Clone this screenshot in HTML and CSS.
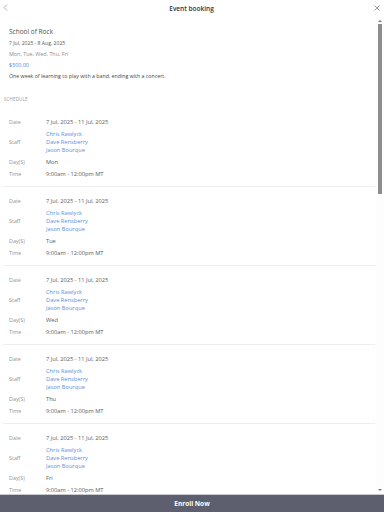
FILE: index.html
```html
<!DOCTYPE html>
<html>
    <head>
        <meta charset="utf-8">
        <link rel="stylesheet" href="styles.css">
    </head>
    <body>
        <div class="topbar">
            <span class="back">
                <svg width="5" height="7" viewBox="0 0 5 7"><path d="M4 0.5 L1 3.5 L4 6.5" fill="none" stroke="#999" stroke-width="0.8"/></svg>
            </span>
            <span class="title">Event booking</span>
            <span class="close">
                <svg width="6" height="6" viewBox="0 0 6 6"><path d="M0.5 0.5 L5.5 5.5 M5.5 0.5 L0.5 5.5" fill="none" stroke="#888" stroke-width="0.8"/></svg>
            </span>
        </div>

        <div class="body-wrap">
            <div class="scroller">
                <div class="intro">
                    <div class="event-name">School of Rock</div>
                    <div class="event-dates">7 Jul, 2025 - 8 Aug, 2025</div>
                    <div class="event-days">Mon, Tue, Wed, Thu, Fri</div>
                    <div class="event-price">$300.00</div>
                    <div class="event-desc">One week of learning to play with a band, ending with a concert.</div>
                </div>

                <div class="section-title">SCHEDULE</div>

                <div class="schedule" id="schedule"></div>
            </div>

            <div class="scrollbar">
                <span class="arrow up"></span>
                <span class="thumb"></span>
                <span class="arrow down"></span>
            </div>
        </div>

        <div class="footer">Enroll Now</div>

        <script type="text/javascript">
            var days = ["Mon", "Tue", "Wed", "Thu", "Fri"];
            var staff = ["Chris Rawlyck", "Dave Rensberry", "Jason Bourque"];
            var html = "";
            for (var i = 0; i < days.length; i++) {
                html += `<div class="session">
                            <div class="label">Date</div><div class="value">7 Jul, 2025 - 11 Jul, 2025</div>
                            <div class="label">Staff</div>
                            <div class="value staff">${staff.map(function(s) { return "<div>" + s + "</div>"; }).join("")}</div>
                            <div class="label">Day(S)</div><div class="value">${days[i]}</div>
                            <div class="label">Time</div><div class="value">9:00am - 12:00pm MT</div>
                         </div>`;
            }
            document.getElementById("schedule").innerHTML = html;
        </script>
    </body>
</html>
```

FILE: styles.css
```css
html, body {
    margin: 0;
    height: 100%;
}

body {
    display: flex;
    flex-direction: column;
    font-family: "Open Sans", "Noto Sans", sans-serif;
    background-color: #ffffff;
    color: #444444;
}

.topbar {
    height: 17px;
    flex: none;
    display: flex;
    align-items: center;
    justify-content: space-between;
    padding: 0 4px 0 3px;
}

.back, .close {
    width: 6px;
    display: flex;
    align-items: center;
}

.back svg {
    margin-top: -2px;
}

.close svg {
    margin-top: -1px;
}

.title {
    font-size: 6.5px;
    font-weight: 600;
    color: #2e3148;
    margin-top: -1px;
}

.body-wrap {
    flex: 1;
    position: relative;
    min-height: 0;
    display: flex;
}

.scroller {
    flex: 1;
    overflow: hidden;
    padding-right: 8px;
}

/* drawn scrollbar on the right edge */
.scrollbar {
    position: absolute;
    top: 0;
    right: 0;
    bottom: 0;
    width: 8px;
    display: flex;
    flex-direction: column;
    align-items: center;
    background-color: #fdfdfd;
}

.arrow {
    width: 0;
    height: 0;
    border-left: 2px solid transparent;
    border-right: 2px solid transparent;
}

.arrow.up {
    border-bottom: 2px solid #777777;
    margin: 3px 0 2px 0;
}

.arrow.down {
    border-top: 2px solid #777777;
    margin: auto 0 3px 0;
}

.thumb {
    width: 4px;
    height: 170px;
    background-color: #8c8c8c;
}

.intro {
    padding: 10px 9px 0 9px;
}

.event-name {
    font-size: 6.5px;
    line-height: 10px;
    margin-bottom: 1px;
    color: #505050;
}

.event-dates, .event-days, .event-price, .event-desc {
    font-size: 5.1px;
    line-height: 11px;
}

.event-dates {
    color: #5a5a5a;
}

.event-days {
    font-size: 5.4px;
    color: #8e8e8e;
}

.event-price {
    font-size: 5.4px;
    color: #4a86e0;
}

.event-desc {
    font-size: 5.25px;
    color: #444444;
}

.section-title {
    font-size: 4.4px;
    letter-spacing: 0.2px;
    line-height: 8px;
    color: #9a9a9a;
    margin: 13px 0 5px 4px;
}

.schedule {
    padding-left: 3px;
    padding-right: 1px;
}

.session {
    display: grid;
    grid-template-columns: 37px auto;
    padding: 8px 6px 6px 6px;
    border-bottom: 1px solid #eeeeee;
    font-size: 5.7px;
}

.label, .value {
    line-height: 8px;
    padding: 2px 0;
}

.label {
    font-size: 5.4px;
    color: #939393;
    display: flex;
    align-items: center;
}

.value {
    color: #5c5c5c;
}

.staff {
    color: #5b8fe0;
}

.footer {
    height: 18px;
    flex: none;
    background-color: #5d5f6e;
    border-top: 1px solid #c9cad0;
    box-sizing: border-box;
    display: flex;
    align-items: center;
    justify-content: center;
    color: #ffffff;
    font-size: 6.5px;
    font-weight: 700;
}
```
